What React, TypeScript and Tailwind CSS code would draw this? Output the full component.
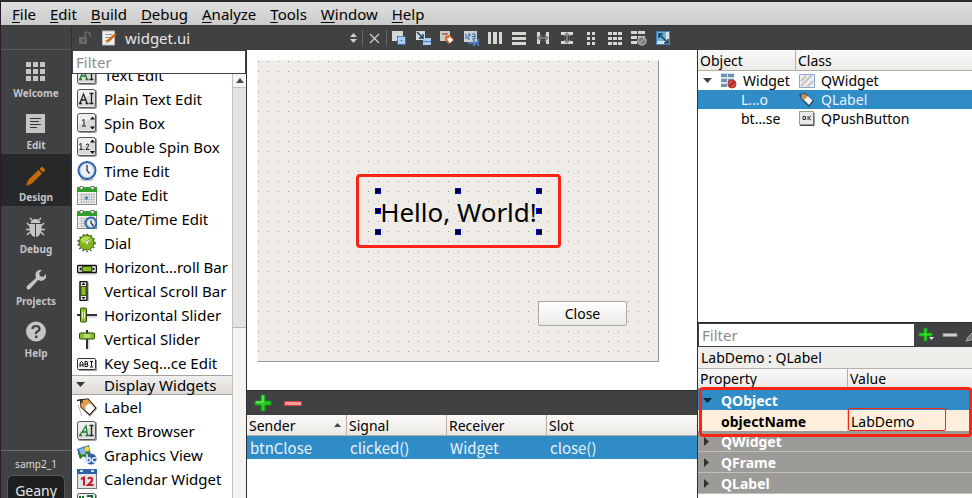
import React from "react";

type IconProps = { children: React.ReactNode; size?: number };

function Glyph({ children, size = 20 }: IconProps) {
  return (
    <svg width={size} height={size} viewBox={`0 0 ${size} ${size}`} className="shrink-0" aria-hidden="true">
      {children}
    </svg>
  );
}

function Tile() {
  return (
    <>
      <rect x="1" y="1" width="19" height="19" rx="2" fill="#9b9b9b" />
      <rect x="0.5" y="0.5" width="18" height="18" rx="2" fill="#ededed" stroke="#555" />
      <path d="M1 12L18 4V17H1Z" fill="#d9d9d9" />
    </>
  );
}

function AIMark({ color, italic }: { color: string; italic?: boolean }) {
  return (
    <g fill="none" stroke={color} strokeWidth="1.3">
      {italic ? <path d="M3 14L9 5L10.5 14M5.5 11H10M2 14.5h3M8.5 14.5h4" /> : <path d="M3 14L6.5 5L10 14M4.5 11H9M2 14.5h3M8.5 14.5h3" />}
      <path d="M12.5 4.5h4M14.5 4.5v10M12.5 14.5h4" stroke="#222" />
    </g>
  );
}

function Clock({ cx, cy, r }: { cx: number; cy: number; r: number }) {
  return (
    <>
      <circle cx={cx} cy={cy} r={r} fill="#eef2f6" stroke="#2d62a6" strokeWidth="2" />
      <circle cx={cx} cy={cy} r={r - 1.5} fill="none" stroke="#8fb1dc" strokeWidth="0.7" />
      <path d={`M${cx} ${cy - r + 3}V${cy}L${cx + 2.5} ${cy + 3}`} stroke="#333" strokeWidth="1.3" fill="none" />
    </>
  );
}

function CalendarGrid() {
  return (
    <>
      <rect x="0.5" y="3" width="19" height="16.5" fill="#f4f4f4" stroke="#888" />
      <rect x="0" y="2" width="20" height="5" fill="#2f9e2b" />
      <path d="M3 4V1.500h3V4M14 4V1.500h3V4" fill="#fff" stroke="#777" />
      <path d="M2 9.500H18M2 12H18M2 14.500H18M2 17H18M4.500 8V18.500M7 8V18.500M9.500 8V18.500M12 8V18.500M14.500 8V18.500M17 8V18.500" stroke="#b5b5b5" strokeWidth="0.8" />
    </>
  );
}

function TagShape() {
  return (
    <>
      <path d="M5 19L1 8" stroke="#bbb" fill="none" />
      <path d="M4 4L11 3L20 12L13 20L4.500 11Z" fill="#b5b5b5" />
      <path d="M3.500 3L11 2L19 11L12.500 18L4 10Z" fill="#fff" stroke="#35220f" strokeWidth="1.200" />
      <path d="M4 3.500L10.500 2.500L14 6L7.500 13L4.500 10Z" fill="#e89a4c" />
      <path d="M8 10L11.500 6.500L17 11.500L12.500 16.500Z" fill="#fff" />
      <path d="M0 3.500L5 2.500V6" stroke="#222" fill="none" strokeWidth="1.300" />
    </>
  );
}

const icons: Record<string, React.ReactNode> = {
  text: <><Tile /><AIMark color="#1c7a2c" /></>,
  plain: <><Tile /><AIMark color="#222" /></>,
  browser: <><Tile /><AIMark color="#1c7a2c" italic /></>,
  spin: <><Tile /><path d="M5 7.500L7 6.500V13M5 13h4" stroke="#222" fill="none" /><path d="M13 6.500L15.500 3.500L18 6.500ZM13 13.500L15.500 16.500L18 13.500Z" fill="#111" /></>,
  double: <><Tile /><path d="M2 7.500L4 6.500V12.500M2.500 12.500h3M7 12v1M9 8Q10 6 11.500 7.500Q12 9 9 12.500H12.500" stroke="#222" fill="none" /><path d="M13 5.500L15.500 2.500L18 5.500ZM13 14L15.500 17L18 14Z" fill="#111" /></>,
  time: <><ellipse cx="10" cy="18.500" rx="7" ry="1.500" fill="#bbb" /><Clock cx={10} cy={9.5} r={8.5} /></>,
  date: <><CalendarGrid /><rect x="8" y="11.500" width="3" height="3" fill="#4d8be0" /></>,
  datetime: <><CalendarGrid /><Clock cx={14} cy={14} r={5.500} /></>,
  dial: <><circle cx="9.500" cy="10" r="8.500" fill="none" stroke="#4b4b2c" strokeWidth="1.500" strokeDasharray="1.500 2.500" /><circle cx="9.500" cy="9.500" r="7.500" fill="#83b81a" stroke="#426406" /><ellipse cx="9" cy="7" rx="5" ry="3.500" fill="#b4dc55" /><path d="M8 10L13 5L10.500 12Z" fill="#fff" stroke="#567" strokeWidth="0.5" /></>,
  hscroll: <><path d="M1 17H20" stroke="#bbb" /><rect x="0.500" y="8.500" width="19" height="7" rx="1" fill="#eee" stroke="#111" strokeWidth="1.500" /><rect x="5.500" y="9.500" width="9" height="5" fill="#8bbd25" stroke="#365409" /><path d="M4.500 10V14L2 12ZM15.500 10V14L18 12Z" fill="#111" /></>,
  vscroll: <><path d="M11.500 1V20" stroke="#bbb" /><rect x="3" y="0.500" width="7" height="19" rx="1" fill="#eee" stroke="#111" strokeWidth="1.500" /><rect x="4" y="5.500" width="5" height="9" fill="#8bbd25" stroke="#365409" /><path d="M4.500 4H8.500L6.500 1.500ZM4.500 16H8.500L6.500 18.500Z" fill="#111" /></>,
  hslider: <><path d="M0 10H20" stroke="#333" strokeWidth="2" /><path d="M2 12H20" stroke="#bbb" /><rect x="3.500" y="3" width="6" height="14" rx="1" fill="#8bbd25" stroke="#304b07" /><path d="M5.500 6.500v7M7.500 6.500v7" stroke="#e7f6b8" /></>,
  vslider: <><path d="M10 1V20" stroke="#333" strokeWidth="2" /><path d="M12 2V20" stroke="#bbb" /><rect x="2.500" y="4" width="15" height="6" rx="1" fill="#8bbd25" stroke="#304b07" /><path d="M6.500 6h7M6.500 8h7" stroke="#e7f6b8" /></>,
  key: <><rect x="2" y="7" width="18" height="11" fill="#999" /><rect x="0.5" y="5.500" width="18" height="11" rx="1" fill="#f6f6f6" stroke="#333" /><path d="M3 14V10L4.500 8.500L6 10V14M3 12H6M8 8.500V13.500H10.500L11 12L10 11L11 10L10 8.500H8M8 11H10M13 8.500h3M14.500 8.500v5M13 14h3" stroke="#111" fill="none" /></>,
  label: <TagShape />,
  graphics: <><path d="M0 4L12 0L14 11L3 14Z" fill="#2e6fba" /><path d="M1 8Q6 5 13 8L14 11L3 14Z" fill="#32781e" /><path d="M2 4L7 3L9 9L4 10Z" fill="#87b6ea" /><circle cx="10" cy="4" r="2.500" fill="#f4df25" /><circle cx="14" cy="14" r="5.500" fill="#315f9f" /><path d="M4 15Q6 11 8 13V17M10 9V17Q14 18 13 13Q11 12 10 14M19 13Q15 12 15 16Q17 18 20 16" stroke="#edf4ff" fill="none" strokeWidth="1.500" /></>,
  calendar: <><rect x="0.5" y="1" width="19" height="18.500" fill="#e4e4e4" stroke="#777" /><rect x="0" y="0" width="20" height="5" fill="#2d62a6" /><path d="M3 2h3M14 2h3" stroke="#c4daf3" strokeWidth="2" /><path d="M4 10L7 8.500V16.500M11 10Q12 8 14.500 9Q17 11 11 16H16.500" stroke="#c11b29" strokeWidth="2" fill="none" /></>,
  lcd: <><Tile /><path d="M3 3V8H6V3M10 3H15V8" stroke="#19692c" strokeWidth="2" fill="none" /></>,
};

const inputWidgets: [string, string][] = [
  ["text", "Text Edit"],
  ["plain", "Plain Text Edit"],
  ["spin", "Spin Box"],
  ["double", "Double Spin Box"],
  ["time", "Time Edit"],
  ["date", "Date Edit"],
  ["datetime", "Date/Time Edit"],
  ["dial", "Dial"],
  ["hscroll", "Horizont…roll Bar"],
  ["vscroll", "Vertical Scroll Bar"],
  ["hslider", "Horizontal Slider"],
  ["vslider", "Vertical Slider"],
  ["key", "Key Seq…ce Edit"],
];

const displayWidgets: [string, string][] = [
  ["label", "Label"],
  ["browser", "Text Browser"],
  ["graphics", "Graphics View"],
  ["calendar", "Calendar Widget"],
  ["lcd", "LCD Number"],
];

function WidgetRow({ icon, name }: { icon: string; name: string }) {
  return (
    <li className="flex h-6 items-center gap-[7px] pl-[5px] whitespace-nowrap">
      <Glyph>{icons[icon]}</Glyph>
      <span>{name}</span>
    </li>
  );
}

const modes: { name: string; active?: boolean; art: React.ReactNode }[] = [
  {
    name: "Welcome",
    art: <path d="M0 1h5v5H0zM7 1h5v5H7zM14 1h5v5h-5zM0 8h5v5H0zM7 8h5v5H7zM14 8h5v5h-5zM0 15h5v5H0zM7 15h5v5H7zM14 15h5v5h-5z" fill="#c4c5c6" />,
  },
  {
    name: "Edit",
    art: <><path d="M0 1h19v19H0z" fill="#c4c5c6" /><path d="M4 5.500h11M4 8.500h9M4 11.500h11M4 14.500h7" stroke="#333" /></>,
  },
  {
    name: "Design",
    active: true,
    art: <path d="M0 21L2.500 14.500L12.500 5L16 8.500L6 18.500ZM13.500 4L16 1.500L19.500 5L17 7.500Z" fill="#c46a08" />,
  },
  {
    name: "Debug",
    art: <><path d="M4.500 6Q5.500 2 9.500 2T14.500 6Z" fill="#c4c5c6" /><path d="M3.500 7H9V20Q2.500 19 3.500 7M10 7H15.500Q16.500 19 10 20Z" fill="#c4c5c6" /><path d="M6 3L4 1M13 3L15 1M4 9L1 6M15 9L18 6M4 12.500H0M15 12.500H19M4 15L1 18M15 15L18 18" stroke="#c4c5c6" strokeWidth="1.500" fill="none" /></>,
  },
  {
    name: "Projects",
    art: <path d="M1 17L10 9Q8 3 13 1L16 1L13 4L14 7L17 8L20 5Q21 11 15 12L12 11L4 20Q2 21 1 20Q0 18 1 17Z" fill="#c4c5c6" />,
  },
  {
    name: "Help",
    art: <><circle cx="10" cy="10.500" r="10" fill="#c4c5c6" /><path d="M6.500 8Q6.500 5 10 5T13.500 8Q13.500 9.500 11.500 10.500T10 13" stroke="#3f4042" strokeWidth="2.200" fill="none" /><path d="M9 14.500h2.500v2.500H9z" fill="#3f4042" /></>,
  },
];

const toolArt: [string, React.ReactNode][] = [
  ["Edit Widgets", <><path d="M1 1h11v10H1z" fill="#d5d5d3" /><path d="M6.500 6.500h8v8h-8z" fill="#a8cbf8" stroke="#2c5fa8" strokeDasharray="2 1" /><path d="M10 10h1v1h-1z" fill="#123" /></>],
  ["Edit Signals/Slots", <><path d="M1 1h9v9H1z" fill="#d5d5d3" /><path d="M8 8h8v7H8z" fill="#a8cbf8" /><path d="M8 11.500h8" stroke="#4a7fca" /><path d="M2 2L8 8M8 4V8H4" stroke="#174166" strokeWidth="1.500" fill="none" /></>],
  ["Edit Buddies", <><path d="M1 1h10v10H1z" fill="#c9c8c5" /><path d="M3 4H9" stroke="#922" /><path d="M6 6L11 5L15 10L10 14L6 10Z" fill="#ee6825" /><path d="M8 9L11 7L14 10L11 13Z" fill="#fff" /></>],
  ["Edit Tab Order", <><path d="M1 1h13v11H1z" fill="#cdcfd0" /><path d="M3 4V9M5 4h2v2H5v3h2M9 4h3v5H9M9 6.500h3" stroke="#2b62b0" fill="none" /><path d="M5 13H13M10 10L13 13L10 16M15 9V16" stroke="#4d86d8" strokeWidth="1.500" fill="none" /></>],
  ["Lay Out Horizontally", <path d="M1 2h3v12H1zM6 2h4v12H6zM12 2h3v12h-3z" fill="#d9d8d3" />],
  ["Lay Out Vertically", <path d="M1 2h14v3H1zM1 7h14v3H1zM1 12h14v3H1z" fill="#d9d8d3" />],
  ["Horizontal Splitter", <><path d="M2 2h3v12H2zM11 2h3v12h-3z" fill="#d9d8d3" /><path d="M3 8h10M6 5L3 8L6 11M10 5L13 8L10 11" stroke="#8b8b87" strokeWidth="1.500" fill="none" /></>],
  ["Vertical Splitter", <><path d="M2 2h12v3H2zM2 11h12v3H2z" fill="#d9d8d3" /><path d="M8 3v10M5 6L8 3L11 6M5 10L8 13L11 10" stroke="#8b8b87" strokeWidth="1.500" fill="none" /></>],
  ["Form Layout", <path d="M4 2h3v3H4zM9 2h3v3H9zM4 7h3v3H4zM9 7h3v3H9zM4 12h3v3H4zM9 12h3v3H9z" fill="#d9d8d3" />],
  ["Grid Layout", <path d="M1 2h4v3H1zM6 2h4v3H6zM11 2h4v3h-4zM1 7h4v3H1zM6 7h4v3H6zM11 7h4v3h-4zM1 12h4v3H1zM6 12h4v3H6zM11 12h4v3h-4z" fill="#d9d8d3" />],
  ["Break Layout", <><path d="M0 1h6v3H0zM7 1h7v3H7zM0 6h6v3H0zM7 6h7v3H7zM0 11h6v3H0z" fill="#d9d8d3" /><circle cx="11" cy="11" r="4" fill="#777" stroke="#aaa9a5" strokeWidth="1.500" /><path d="M8 14L14 8" stroke="#aaa9a5" strokeWidth="1.500" /></>],
  ["Adjust Size", <><path d="M1 1h14v14H1z" fill="#d7dfe6" /><path d="M1 1h10v10H1z" fill="#69b0dd" /><path d="M1.500 1.500h13v13h-13z" stroke="#3d7fb8" fill="none" /><path d="M4 4L13 13M4 8V4H8M13 9V13H9" stroke="#12425d" strokeWidth="1.500" fill="none" /></>],
];

function Plus() {
  return (
    <Glyph size={18}>
      <path d="M7 1h4v6h6v4h-6v6H7v-6H1V7h6z" fill="#26cf22" stroke="#159313" />
      <path d="M8 2h1v6H2" stroke="#8df588" fill="none" />
    </Glyph>
  );
}

function Handle({ place }: { place: string }) {
  return <span className={`absolute size-[6px] border border-[#0000e6] bg-black ${place}`} />;
}

const menus = ["File", "Edit", "Build", "Debug", "Analyze", "Tools", "Window", "Help"];

const headCell = "border-b border-[#b5aea6] bg-linear-to-b from-[#faf9f8] to-[#eceae7] p-0 text-left font-normal";

export default function App() {
  return (
    <div className="flex h-screen flex-col overflow-hidden border-l border-[#2d1a28] bg-[#404142] font-['Noto_Sans',sans-serif] text-[14px] leading-[19px] text-black">
      <nav className="flex h-[26px] shrink-0 items-center gap-[14px] border-t-2 border-b border-t-[#2b2a29] border-b-[#38393a] bg-linear-to-b from-[#dfdfdf] to-[#cbcbcb] pt-px pl-[11px] text-[15px]">
        {menus.map((m) => (
          <button key={m} className="whitespace-nowrap">
            <span className="underline decoration-1 underline-offset-2">{m[0]}</span>
            {m.slice(1)}
          </button>
        ))}
      </nav>

      <div className="flex min-h-0 flex-1">
        <aside className="flex w-[71px] shrink-0 flex-col border-r border-[#2f3031] text-[#c4c5c6]">
          <div className="h-6 shrink-0 border-b border-[#5a5b5c]" />
          {modes.map((m) => (
            <button
              key={m.name}
              className={`flex h-[52px] shrink-0 flex-col items-center gap-1 pt-[11px] text-[10px] leading-[14px] font-bold ${m.active ? "bg-[#262829]" : ""}`}
            >
              <Glyph size={21}>{m.art}</Glyph>
              {m.name}
            </button>
          ))}
          <div className="mt-auto flex h-12 shrink-0 flex-col items-center border-t border-[#6a6b6c] pt-[6px] text-[10px] leading-[14px] text-[#dededf]">
            <span>samp2_1</span>
            <span className="mt-1 flex h-6 w-[58px] items-center justify-center rounded-t-md border border-b-0 border-[#555657] bg-[#1d1e1f] pt-[7px] text-[14px] text-[#e4e4e4]">
              Geany
            </span>
          </div>
        </aside>

        <div className="flex min-w-0 flex-1 flex-col">
          <div className="flex h-6 shrink-0 items-center text-[#dedede]">
            <button aria-label="Lock" className="flex w-[30px] items-center pl-[6px]">
              <Glyph size={14}>
                <path d="M1 6h8v7H1z" fill="#68696a" />
                <path d="M7 6V3Q7 1 9.500 1T12 3V6" stroke="#68696a" strokeWidth="1.500" fill="none" />
                <path d="M4.500 8h1v3h-1z" fill="#333" />
              </Glyph>
            </button>
            <Glyph size={16}>
              <path d="M0.500 1h12v14h-12z" fill="#f1f0ec" stroke="#bbb" />
              <path d="M3 4.500h7M3 7.500h6M3 10.500h3" stroke="#999" />
              <path d="M4 13L5 10L13 3L14.500 5L7 12Z" fill="#ce6c16" />
            </Glyph>
            <div className="relative flex w-[240px] items-center pl-[7px]">
              <select aria-label="Open document" className="w-full appearance-none bg-transparent text-[15px] text-[#e6e6e6]">
                <option>widget.ui</option>
              </select>
              <svg width="9" height="12" viewBox="0 0 9 12" className="pointer-events-none absolute right-0" aria-hidden="true">
                <path d="M1 5L4.500 1L8 5ZM1 7L4.500 11L8 7Z" fill="#cfcfcf" />
              </svg>
            </div>
            <button aria-label="Close document" className="ml-1 flex h-4 w-[25px] items-center justify-center border-x border-[#66676a]">
              <Glyph size={11}><path d="M1 1L10 10M10 1L1 10" stroke="#cfcfcf" strokeWidth="1.200" /></Glyph>
            </button>
            {toolArt.map(([name, art]) => (
              <button key={name} aria-label={name} className="flex w-6 shrink-0 justify-center">
                <Glyph size={16}>{art}</Glyph>
              </button>
            ))}
          </div>

          <div className="flex min-h-0 flex-1">
            <section className="flex w-[175px] shrink-0 flex-col border-r border-[#2f3031]">
              <input
                aria-label="Filter widgets"
                placeholder="Filter"
                className="mx-px mt-px mb-px h-[22px] shrink-0 bg-white px-[3px] text-[15px] outline-none placeholder:text-[#8d8d8d]"
              />
              <div className="flex min-h-0 flex-1 bg-white text-[15px]">
                <div className="min-w-0 flex-1 overflow-hidden">
                  <ul className="-mt-[11px]">
                    {inputWidgets.map(([i, n]) => <WidgetRow key={n} icon={i} name={n} />)}
                  </ul>
                  <button className="flex h-5 w-full items-center border-y border-[#a8a39d] bg-linear-to-b from-[#f1efed] to-[#dedbd7] pl-1">
                    <svg width="9" height="6" viewBox="0 0 9 6" aria-hidden="true"><path d="M0 0H9L4.500 5Z" fill="#3a3a3a" /></svg>
                    <span className="pl-[19px]">Display Widgets</span>
                  </button>
                  <ul>
                    {displayWidgets.map(([i, n]) => <WidgetRow key={n} icon={i} name={n} />)}
                  </ul>
                </div>
                <div className="flex w-[14px] shrink-0 flex-col border-l border-[#c3c0bb] bg-[#f5f4f2]">
                  <div className="flex h-[14px] shrink-0 items-center justify-center border-b border-[#c3c0bb]">
                    <svg width="8" height="5" viewBox="0 0 8 5" aria-hidden="true"><path d="M0 5L4 0L8 5Z" fill="#4a4a4a" /></svg>
                  </div>
                  <div className="h-[240px] shrink-0 border-b border-[#bab7b2] bg-[#e3e2df]" />
                </div>
              </div>
            </section>

            <main className="flex min-w-0 flex-1 flex-col">
              <div className="min-h-0 flex-1 overflow-hidden bg-white pt-[10px] pl-[10px]">
                <div className="relative h-[302px] w-[402px] border border-t-[#f4f2ef] border-r-[#9b9a96] border-b-[#9b9a96] border-l-[#f4f2ef] bg-[#efece8] bg-[conic-gradient(at_1px_1px,transparent_75%,#9a9895_0)] bg-[length:10px_10px]">
                  <div className="absolute top-[130px] left-[120px] flex h-[41px] w-[161px] items-center justify-center text-[26px] leading-[36px] whitespace-nowrap">
                    Hello, World!
                    <Handle place="-top-[3px] -left-[3px]" />
                    <Handle place="-top-[3px] left-[77px]" />
                    <Handle place="-top-[3px] -right-[3px]" />
                    <Handle place="top-[17px] -left-[3px]" />
                    <Handle place="top-[17px] -right-[3px]" />
                    <Handle place="-bottom-[3px] -left-[3px]" />
                    <Handle place="-bottom-[3px] left-[77px]" />
                    <Handle place="-right-[3px] -bottom-[3px]" />
                  </div>
                  <div className="absolute top-[113px] left-[98px] h-[74px] w-[205px] rounded border-3 border-[#fb2314]" />
                  <button className="absolute top-[240px] left-[280px] h-[25px] w-[89px] rounded-xs border border-[#aaa7a3] bg-linear-to-b from-white to-[#ebeae8]">
                    Close
                  </button>
                </div>
              </div>
              <div className="flex h-[25px] shrink-0 items-center gap-3 border-t border-[#2b2c2d] pl-[7px]">
                <button aria-label="Add connection"><Plus /></button>
                <button aria-label="Remove connection">
                  <Glyph size={18}><path d="M0.500 7.500h17v4h-17z" fill="#f79b9b" stroke="#cc4444" /></Glyph>
                </button>
              </div>
              <div className="h-[83px] shrink-0 bg-white">
                <table className="w-full table-fixed border-separate border-spacing-0">
                  <colgroup>
                    <col className="w-[100px]" />
                    <col className="w-[100px]" />
                    <col className="w-[100px]" />
                    <col />
                  </colgroup>
                  <thead>
                    <tr className="h-[21px]">
                      {["Sender", "Signal", "Receiver", "Slot"].map((h, i) => (
                        <th key={h} className={`${headCell} ${i < 3 ? "border-r" : ""}`}>
                          <span className="flex items-center justify-between pr-[5px] pl-[2px]">
                            {h}
                            {i === 0 && <svg width="7" height="4" viewBox="0 0 7 4" aria-hidden="true"><path d="M0 4L3.500 0L7 4Z" fill="#444" /></svg>}
                          </span>
                        </th>
                      ))}
                    </tr>
                  </thead>
                  <tbody className="font-['Noto_Sans_CJK_SC',sans-serif] text-[15px] leading-[23px] text-[#e8f3fb]">
                    <tr className="h-[23px] bg-[#308cc6]">
                      {["btnClose", "clicked()", "Widget", "close()"].map((c) => <td key={c} className="p-0 pl-[3px]">{c}</td>)}
                    </tr>
                  </tbody>
                </table>
              </div>
            </main>

            <aside className="flex w-[275px] shrink-0 flex-col overflow-hidden border-l border-[#2f3031]">
              <div className="min-h-0 flex-1 bg-white">
                <table className="w-full table-fixed border-separate border-spacing-0">
                  <colgroup>
                    <col className="w-[98px]" />
                    <col />
                  </colgroup>
                  <thead>
                    <tr className="h-[21px]">
                      <th className={`${headCell} border-r pl-[2px]`}>Object</th>
                      <th className={`${headCell} pl-[2px]`}>Class</th>
                    </tr>
                  </thead>
                  <tbody>
                    <tr className="h-[19px]">
                      <td className="p-0">
                        <span className="flex items-center pl-[5px]">
                          <svg width="9" height="5" viewBox="0 0 9 5" aria-hidden="true"><path d="M0 0H9L4.500 5Z" fill="#444" /></svg>
                          <span className="pr-[6px] pl-[9px]">
                            <Glyph size={16}>
                              <path d="M0 0h13v14H0z" fill="#d3dee7" />
                              <path d="M0 1h6v3H0zM7 1h6v3H7zM0 6h6v3H0zM7 6h6v3H7zM0 11h6v3H0z" fill="#6e93b1" />
                              <circle cx="11" cy="11" r="4" fill="#d94b45" stroke="#b72d2d" /><path d="M8.500 13.500L13.500 8.500" stroke="#8c2424" strokeWidth="1.500" />
                            </Glyph>
                          </span>
                          Widget
                        </span>
                      </td>
                      <td className="p-0">
                        <span className="flex items-center gap-[6px] pl-[3px]">
                          <Glyph size={16}><path d="M0.500 1.500h15v13h-15z" fill="#eee" stroke="#88a5d3" /><path d="M2 8L7 3M2 13L13 2M8 14L14 8" stroke="#c4c4c4" strokeWidth="2" /></Glyph>
                          QWidget
                        </span>
                      </td>
                    </tr>
                    <tr className="h-[19px] bg-[#308cc6] text-[#e8f3fb]">
                      <td className="p-0 pl-[43px]">L…o</td>
                      <td className="p-0">
                        <span className="flex items-center gap-[6px] pl-[3px]">
                          <Glyph size={16}>
                            <path d="M0 2L6 1L15 9L10 15L2 7Z" fill="#244b66" />
                            <path d="M2 2.500L6 2L9 4.500L5.500 9L2.500 6.500Z" fill="#c4915d" /><path d="M5 8L9 4L13.500 8.500L10 13Z" fill="#f1f1f1" />
                          </Glyph>
                          QLabel
                        </span>
                      </td>
                    </tr>
                    <tr className="h-[19px]">
                      <td className="p-0 pl-[43px]">bt…se</td>
                      <td className="p-0">
                        <span className="flex items-center gap-[6px] pl-[3px]">
                          <Glyph size={16}><path d="M0.500 0.500h14v13h-14z" fill="#e9e9e9" stroke="#999" /><path d="M1 14.500h14V2" stroke="#444" fill="none" /><path d="M4 5.500h2.500v3H4zM9 5v4M12 5L9.500 7L12 9" stroke="#333" fill="none" /></Glyph>
                          QPushButton
                        </span>
                      </td>
                    </tr>
                  </tbody>
                </table>
              </div>

              <div className="flex h-[25px] shrink-0 items-center border-t border-[#2b2c2d]">
                <input
                  aria-label="Filter properties"
                  placeholder="Filter"
                  className="ml-px h-[22px] w-[215px] shrink-0 bg-white px-[3px] text-[15px] outline-none placeholder:text-[#8d8d8d]"
                />
                <button aria-label="Add property" className="ml-1 shrink-0">
                  <Glyph size={18}>
                    <path d="M6 2h3v5h5v3H9v5H6v-5H1V7h5z" fill="#30d82b" stroke="#159313" />
                    <path d="M11 11h5L13.500 14Z" fill="#ddd" />
                  </Glyph>
                </button>
                <button aria-label="Remove property" className="ml-[6px] shrink-0">
                  <Glyph size={16}><path d="M1 6.500h14v3H1z" fill="#cfcecb" stroke="#8f8f8d" /></Glyph>
                </button>
                <button aria-label="Configure" className="ml-[7px] shrink-0">
                  <Glyph size={16}><path d="M1 14L3 10L8 5L11 8L6 13Z" fill="#77787a" stroke="#aaa" /></Glyph>
                </button>
              </div>
              <div className="h-[22px] shrink-0 border-b border-[#b5b1ac] bg-[#f0eeeb] pl-[3px] leading-[21px]">LabDemo : QLabel</div>
              <div className="relative h-[129px] shrink-0 bg-white">
                <table className="w-full table-fixed border-separate border-spacing-0">
                  <colgroup>
                    <col className="w-[150px]" />
                    <col />
                  </colgroup>
                  <thead>
                    <tr className="h-5">
                      <th className={`${headCell} border-r pl-[2px]`}>Property</th>
                      <th className={`${headCell} pl-[2px]`}>Value</th>
                    </tr>
                  </thead>
                  <tbody>
                    <tr className="h-[21px] bg-[#308cc6] font-bold text-white">
                      <td colSpan={2} className="p-0 align-bottom">
                        <span className="flex items-center gap-[9px] pl-[5px]">
                          <svg width="9" height="6" viewBox="0 0 9 6" aria-hidden="true"><path d="M0 0H9L4.500 5Z" fill="#14242f" /></svg>
                          QObject
                        </span>
                      </td>
                    </tr>
                    <tr className="h-[21px] bg-[#ffeedb]">
                      <td className="border-r border-[#d8cab9] p-0 pl-[23px] align-bottom font-bold">objectName</td>
                      <td className="p-0 align-bottom">
                        <input aria-label="objectName" defaultValue="LabDemo" className="block h-[19px] w-[98px] bg-transparent pl-[3px] outline-none" />
                      </td>
                    </tr>
                    {["QWidget", "QFrame", "QLabel"].map((g) => (
                      <tr key={g} className="h-[21px] bg-[#9d9b97] font-bold text-white">
                        <td colSpan={2} className="border-b border-[#c2c0bc] p-0 align-bottom">
                          <span className="flex items-center gap-[12px] pl-[6px]">
                            <svg width="5" height="9" viewBox="0 0 5 9" aria-hidden="true"><path d="M0 0L5 4.500L0 9Z" fill="#333" /></svg>
                            {g}
                          </span>
                        </td>
                      </tr>
                    ))}
                  </tbody>
                </table>
                <div className="pointer-events-none absolute top-[18px] right-0 left-px h-[50px] rounded-sm border-3 border-[#fb2314]" />
                <div className="pointer-events-none absolute top-[39px] left-[150px] h-[23px] w-[98px] rounded-xs border border-[#fb2314]" />
              </div>
            </aside>
          </div>
        </div>
      </div>
    </div>
  );
}
